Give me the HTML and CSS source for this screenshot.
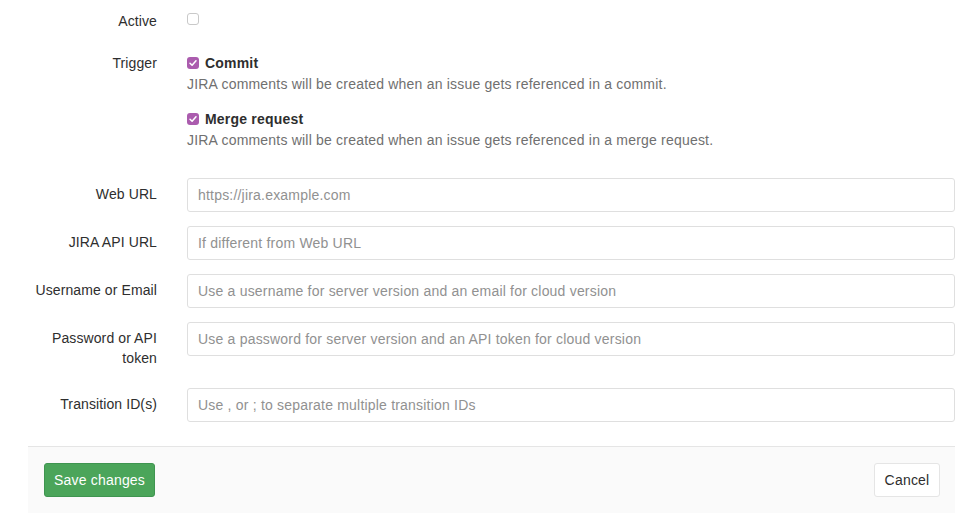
FILE: index.html
```html
<!DOCTYPE html>
<html>
<head>
<meta charset="utf-8">
<link rel="stylesheet" href="styles.css">
</head>
<body>
<form class="form">
  <div class="row row-active">
    <div class="label">Active</div>
    <div class="field">
      <span class="cb cb-off cb-active"></span>
    </div>
  </div>
  <div class="row row-trigger">
    <div class="label">Trigger</div>
    <div class="field">
      <div class="option">
        <div class="opt-title"><span class="cb cb-on"><svg viewBox="0 0 12 12" width="12" height="12"><path d="M3 6.2 L5.1 8.3 L9 3.8" fill="none" stroke="#fff" stroke-width="1.5" stroke-linecap="round" stroke-linejoin="round"/></svg></span><b>Commit</b></div>
        <div class="help">JIRA comments will be created when an issue gets referenced in a commit.</div>
      </div>
      <div class="option">
        <div class="opt-title"><span class="cb cb-on"><svg viewBox="0 0 12 12" width="12" height="12"><path d="M3 6.2 L5.1 8.3 L9 3.8" fill="none" stroke="#fff" stroke-width="1.5" stroke-linecap="round" stroke-linejoin="round"/></svg></span><b>Merge request</b></div>
        <div class="help">JIRA comments will be created when an issue gets referenced in a merge request.</div>
      </div>
    </div>
  </div>
  <div class="row">
    <div class="label">Web URL</div>
    <div class="field"><input class="input" placeholder="https://jira.example.com"></div>
  </div>
  <div class="row">
    <div class="label">JIRA API URL</div>
    <div class="field"><input class="input" placeholder="If different from Web URL"></div>
  </div>
  <div class="row">
    <div class="label">Username or Email</div>
    <div class="field"><input class="input" placeholder="Use a username for server version and an email for cloud version"></div>
  </div>
  <div class="row">
    <div class="label">Password or API token</div>
    <div class="field"><input class="input" placeholder="Use a password for server version and an API token for cloud version"></div>
  </div>
  <div class="row">
    <div class="label">Transition ID(s)</div>
    <div class="field"><input class="input" placeholder="Use , or ; to separate multiple transition IDs"></div>
  </div>
  <div class="footer">
    <button type="button" class="btn btn-save">Save changes</button>
    <button type="button" class="btn btn-cancel">Cancel</button>
  </div>
</form>
</body>
</html>
```
FILE: styles.css
```css
* { box-sizing: border-box; }
body {
  margin: 0;
  background: #fff;
  font-family: "Liberation Sans", Arial, sans-serif;
  font-size: 14px;
  line-height: 20px;
  letter-spacing: 0.2px;
  color: #2e2e2e;
}
.form {
  padding: 5px 19px 0 0;
}
.row {
  display: grid;
  grid-template-columns: 172px 1fr;
  margin-bottom: 14px;
}
.label {
  padding: 6px 15px 6px 28px;
  text-align: right;
  color: #2e2e2e;
  letter-spacing: 0.1px;
}
.field {
  padding-left: 15px;
}
.row-active { margin-bottom: 10px; }
.row-active .field { padding-top: 5px; height: 32px; }
.row-trigger { margin-bottom: 28px; }
.row-trigger .field { padding-top: 6px; }
.option + .option { margin-top: 15px; }
.opt-title { display: flex; align-items: center; }
.opt-title b { font-weight: 700; color: #2e2e2e; }
.cb {
  display: inline-flex;
  width: 12px;
  height: 12px;
  border-radius: 3px;
  margin-right: 6px;
  flex: none;
}
.cb-off {
  border: 1px solid #c9c9c9;
  background: #fff;
}
.cb-on {
  background: #ab5cae;
}
.help {
  color: #707070;
  margin-top: 1px;
}
.input {
  display: block;
  width: 100%;
  height: 34px;
  border: 1px solid #dfdfdf;
  border-radius: 3px;
  padding: 6px 10px;
  font-family: inherit;
  font-size: 14px;
  letter-spacing: 0.2px;
  color: #2e2e2e;
  background: #fff;
  outline: none;
}
.input::placeholder { color: #919191; }
.footer {
  margin: 24px 0 0 28px;
  background: #fafafa;
  border-top: 1px solid #e5e5e5;
  padding: 16px 15px 16px 16px;
  display: flex;
  justify-content: space-between;
  align-items: center;
}
.btn {
  height: 34px;
  padding: 6px 4px;
  border-radius: 3px;
  font-family: inherit;
  font-size: 14px;
  line-height: 20px;
  letter-spacing: 0.2px;
  white-space: nowrap;
  text-align: center;
  cursor: pointer;
}
.btn-save {
  width: 111px;
  background: #4ba55a;
  border: 1px solid #3f9550;
  color: #fff;
}
.btn-cancel {
  width: 66px;
  background: #fff;
  border: 1px solid #e5e5e5;
  color: #2e2e2e;
}
```
